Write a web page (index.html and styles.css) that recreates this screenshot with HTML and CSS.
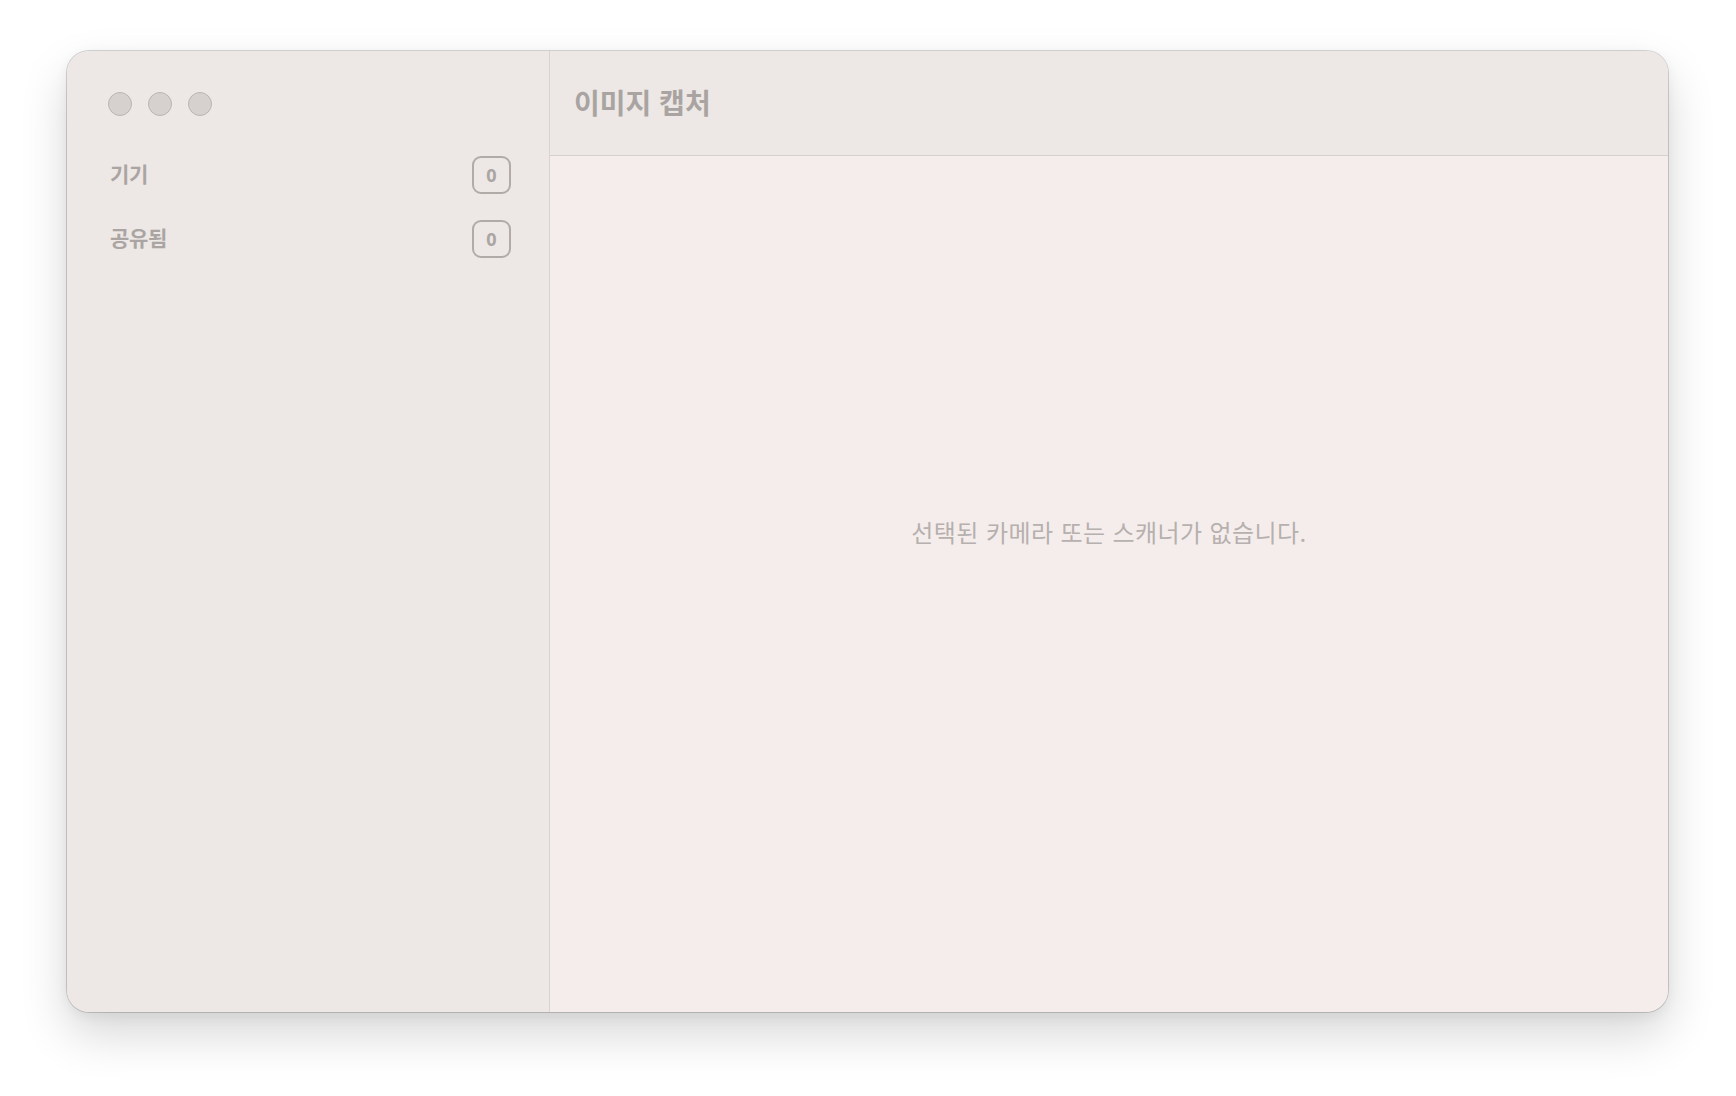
FILE: index.html
```html
<!DOCTYPE html>
<html lang="ko">
<head>
<meta charset="utf-8">
<title>이미지 캡처</title>
<link rel="stylesheet" href="styles.css">
</head>
<body>
<div class="window">
  <aside class="sidebar">
    <div class="lights">
      <span class="light"></span>
      <span class="light"></span>
      <span class="light"></span>
    </div>
    <ul class="list">
      <li class="row"><span class="label">기기</span><span class="badge">0</span></li>
      <li class="row"><span class="label">공유됨</span><span class="badge">0</span></li>
    </ul>
  </aside>
  <main class="main">
    <header class="header"><h1 class="title">이미지 캡처</h1></header>
    <section class="body">
      <p class="empty">선택된 카메라 또는 스캐너가 없습니다.</p>
    </section>
  </main>
</div>
</body>
</html>
```
FILE: styles.css
```css
* { box-sizing: border-box; }
html, body {
  margin: 0;
  padding: 0;
  background: #ffffff;
  width: 1736px;
  height: 1096px;
  overflow: hidden;
  font-family: "Noto Sans CJK KR", "Noto Sans", sans-serif;
}
.window {
  margin: 51px 0 0 67px;
  width: 1601px;
  height: 961px;
  border-radius: 22px;
  overflow: hidden;
  display: flex;
  background: #ede8e5;
  box-shadow: 0 0 0 1px rgba(0,0,0,0.16), 0 22px 48px rgba(0,0,0,0.16), 0 4px 14px rgba(0,0,0,0.06);
}
.sidebar {
  width: 483px;
  flex: none;
  background: #ede8e5;
  border-right: 1px solid #d9d3d0;
  padding: 41px 38px 0 41px;
}
.lights {
  display: flex;
  gap: 16px;
  height: 24px;
}
.light {
  width: 24px;
  height: 24px;
  border-radius: 50%;
  background: #d6d1ce;
  border: 1px solid #bcb6b3;
}
.list {
  list-style: none;
  margin: 40px 0 0;
  padding: 0;
  display: flex;
  flex-direction: column;
  gap: 26px;
}
.row {
  height: 38px;
  display: flex;
  align-items: center;
  justify-content: space-between;
}
.label {
  padding-left: 2px;
  margin-top: -4px;
  font-size: 21px;
  font-weight: 700;
  color: #aaa5a2;
  letter-spacing: -0.3px;
}
.badge {
  width: 39px;
  height: 38px;
  border: 2px solid #b1aba8;
  border-radius: 9px;
  display: flex;
  align-items: center;
  justify-content: center;
  font-family: "Noto Sans", sans-serif;
  font-weight: 700;
  font-size: 18px;
  color: #aaa5a2;
}
.main {
  flex: 1;
  display: flex;
  flex-direction: column;
  background: #f5edec;
}
.header {
  height: 105px;
  flex: none;
  background: #ede8e5;
  border-bottom: 1px solid #d6d0cd;
  display: flex;
  align-items: center;
  padding-left: 24px;
}
.title {
  margin: 0;
  margin-top: -2px;
  font-size: 28px;
  font-weight: 700;
  color: #a9a4a1;
  letter-spacing: 0;
}
.body {
  flex: 1;
  display: flex;
  align-items: center;
  justify-content: center;
  padding-bottom: 106px;
}
.empty {
  margin: 0;
  font-size: 24px;
  font-weight: 400;
  color: #b6b0ae;
  letter-spacing: 0.4px;
}
```
